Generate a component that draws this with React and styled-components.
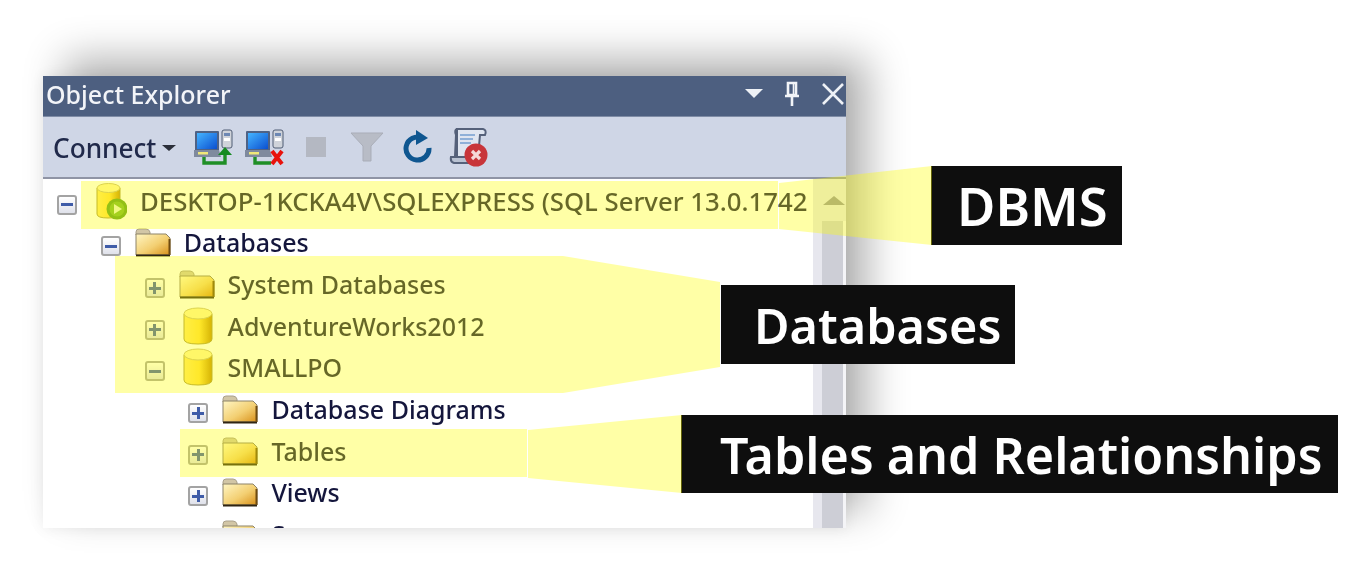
import styled, { createGlobalStyle } from "styled-components";

const GlobalStyle = createGlobalStyle`
  html, body {
    margin: 0;
    padding: 0;
    background: #fff;
    overflow: hidden;
  }
`;

const UI_FONT = `"Noto Sans", "Open Sans", sans-serif`;

const Stage = styled.div`
  position: relative;
  width: 1370px;
  height: 570px;
  box-sizing: border-box;
  padding: 76px 0 0 43px;
  overflow: hidden;
  background: #fff;
  font-family: ${UI_FONT};
`;

const Panel = styled.div`
  width: 803px;
  height: 452px;
  display: flex;
  flex-direction: column;
  overflow: hidden;
  background: #fff;
  box-shadow: 22px -18px 38px rgba(0, 0, 0, 0.3), 0 0 14px rgba(0, 0, 0, 0.07);
`;

const TitleBar = styled.div`
  flex: 0 0 41px;
  box-sizing: border-box;
  display: flex;
  align-items: center;
  justify-content: space-between;
  padding: 0 1px 5px 3px;
  background: #4d5f80;
  border-bottom: 1px solid #7f8ca6;
`;

const TitleText = styled.div`
  color: #f2f4f8;
  font-size: 25px;
  font-weight: 500;
  filter: blur(0.6px);
`;

const TitleIcons = styled.div`
  display: flex;
  align-items: center;
  gap: 20px;
  filter: blur(0.5px);
`;

const Toolbar = styled.div`
  flex: 0 0 62px;
  box-sizing: border-box;
  display: flex;
  align-items: center;
  padding-left: 10px;
  background: #cfd6e6;
  border-bottom: 2px solid #8f94a5;
`;

const ConnectButton = styled.div`
  display: flex;
  align-items: center;
  gap: 6px;
  width: 135px;
  padding-top: 2px;
  color: #20294a;
  font-size: 26.2px;
  font-weight: 500;
  filter: blur(0.6px);
`;

const Caret = styled.span`
  width: 0;
  height: 0;
  border-left: 7px solid transparent;
  border-right: 7px solid transparent;
  border-top: 6px solid #2b2f3a;
`;

const ToolButton = styled.div`
  width: 51px;
  height: 40px;
  display: flex;
  align-items: center;
  justify-content: center;
  filter: blur(0.7px);
`;

const TreeArea = styled.div`
  flex: 1;
  display: flex;
  min-height: 0;
`;

const Tree = styled.div`
  flex: 1;
  padding-top: 1px;
  overflow: hidden;
`;

const Row = styled.div`
  height: 41.67px;
  display: flex;
  align-items: center;
  padding-left: ${(p) => 14 + p.$level * 43.8}px;
  filter: blur(0.6px);
`;

const Expander = styled.div`
  flex: 0 0 20px;
  height: 20px;
  box-sizing: border-box;
  margin: 8px 14px 0 0;
  display: flex;
  align-items: center;
  justify-content: center;
  position: relative;
  border: 2px solid #a3a3a3;
  border-radius: 3px;
  background: linear-gradient(#ffffff, #dfe1ea);

  &::before {
    content: "";
    width: 12px;
    height: 3px;
    background: #3f5ca8;
  }
  &::after {
    content: "";
    display: ${(p) => (p.$open ? "none" : "block")};
    position: absolute;
    width: 3px;
    height: 12px;
    background: #3f5ca8;
  }
`;

const IconCell = styled.div`
  flex: 0 0 36px;
  margin-right: 13px;
  display: flex;
  align-items: center;
`;

const Label = styled.div`
  color: #14163c;
  font-size: ${(p) => (p.$wide ? 25.75 : 25)}px;
  font-weight: 500;
  white-space: nowrap;
`;

const ScrollBar = styled.div`
  flex: 0 0 32px;
  display: flex;
  flex-direction: column;
  background: linear-gradient(90deg, #e7e7ee 0 9px, #cdced6 9px 30px, #f4f4f7 30px);
`;

const ScrollUp = styled.div`
  height: 42px;
  display: flex;
  justify-content: center;
  align-items: center;
  padding-right: 1px;
  background: #e7e7ee;

  &::before {
    content: "";
    width: 0;
    height: 0;
    margin-left: 10px;
    border-left: 11px solid transparent;
    border-right: 11px solid transparent;
    border-bottom: 9px solid #95959f;
  }
`;

const Callout = styled.div`
  position: absolute;
  left: ${(p) => p.$left}px;
  top: ${(p) => p.$top}px;
  width: ${(p) => p.$width}px;
  height: ${(p) => p.$height}px;
  box-sizing: border-box;
  padding-left: ${(p) => p.$inset}px;
  display: flex;
  align-items: center;
  background: #0e0e0e;
  color: #fff;
  font-size: ${(p) => p.$size}px;
  font-weight: 600;
  white-space: nowrap;
`;

const Highlights = styled.svg`
  position: absolute;
  left: 0;
  top: 0;
  pointer-events: none;
`;

const HiddenDefs = styled.svg`
  position: absolute;
  width: 0;
  height: 0;
`;

const Defs = () => (
  <HiddenDefs>
    <defs>
      <linearGradient id="folderFill" x1="0" y1="0" x2="1" y2="1">
        <stop offset="0" stopColor="#fff6c4" />
        <stop offset="0.55" stopColor="#f3cf72" />
        <stop offset="1" stopColor="#d88f18" />
      </linearGradient>
      <linearGradient id="cylFill" x1="0" y1="0" x2="1" y2="0">
        <stop offset="0" stopColor="#ffe66a" />
        <stop offset="0.55" stopColor="#ffdc40" />
        <stop offset="1" stopColor="#c08c08" />
      </linearGradient>
      <linearGradient id="screenFill" x1="0" y1="0" x2="1" y2="1">
        <stop offset="0" stopColor="#45b4ff" />
        <stop offset="1" stopColor="#0b4fd0" />
      </linearGradient>
    </defs>
  </HiddenDefs>
);

const FolderIcon = () => (
  <svg width="36" height="30" viewBox="0 0 36 30">
    <path d="M1 5 Q1 2 4 2 H11 Q14 2 15 5 V8 H1Z" fill="#d2c6a6" stroke="#a9a08a" />
    <path d="M1 7 H31 L35 11 V28 H1Z" fill="url(#folderFill)" stroke="#8d8368" />
    <path d="M1 28.5 H35" stroke="#2f2513" strokeWidth="2" />
    <path d="M34.5 12 V28" stroke="#6e4a10" strokeWidth="2" />
  </svg>
);

const DatabaseIcon = () => (
  <svg width="30" height="38" viewBox="0 0 30 38" style={{ marginLeft: 4 }}>
    <path d="M1 7 V32 Q1 37 15 37 Q29 37 29 32 V7Z" fill="url(#cylFill)" stroke="#a8963e" />
    <ellipse cx="15" cy="6.5" rx="14" ry="5.5" fill="#fff3a0" stroke="#c9bb78" />
  </svg>
);

const ServerIcon = () => (
  <svg width="36" height="38" viewBox="0 0 36 38">
    <path d="M6 6 V32 Q6 36 17 36 Q29 36 29 32 V6Z" fill="url(#cylFill)" stroke="#a8963e" />
    <ellipse cx="17.5" cy="6" rx="11.5" ry="4.5" fill="#fff3a0" stroke="#c9bb78" />
    <circle cx="26" cy="27" r="10.5" fill="#5a9e22" />
    <circle cx="26" cy="27" r="7.5" fill="#76b82e" />
    <path d="M23 22 L31 27 L23 32Z" fill="#e8f4c8" />
  </svg>
);

const ConnectIcon = ({ children }) => (
  <svg width="40" height="38" viewBox="0 0 40 38">
    <rect x="28" y="2" width="10" height="18" rx="2" fill="#cfd3da" stroke="#4f5c74" />
    <rect x="30" y="5" width="6" height="3" fill="#6d88b4" />
    <rect x="30" y="10" width="6" height="3" fill="#fff" />
    <rect x="1" y="3" width="24" height="20" rx="1" fill="#4f6285" />
    <rect x="3" y="5" width="20" height="16" fill="url(#screenFill)" />
    <path d="M0 22 H25 L27 29 H0Z" fill="#7f8a9e" />
    <rect x="4" y="24" width="10" height="2.5" fill="#f0e878" />
    {children}
  </svg>
);

const PinIcon = () => (
  <svg width="18" height="26" viewBox="0 0 18 26" fill="none" stroke="#f2f4f8" strokeWidth="2.6">
    <path d="M5 2 H13 V14 H5Z M2 15 H16 M9 15 V25" />
    <path d="M10.5 3 V13" strokeWidth="1.6" />
  </svg>
);

const rows = [
  { level: 0, open: true, wide: true, icon: <ServerIcon />, label: "DESKTOP-1KCKA4V\\SQLEXPRESS (SQL Server 13.0.1742" },
  { level: 1, open: true, icon: <FolderIcon />, label: "Databases" },
  { level: 2, icon: <FolderIcon />, label: "System Databases" },
  { level: 2, icon: <DatabaseIcon />, label: "AdventureWorks2012" },
  { level: 2, open: true, icon: <DatabaseIcon />, label: "SMALLPO" },
  { level: 3, icon: <FolderIcon />, label: "Database Diagrams" },
  { level: 3, icon: <FolderIcon />, label: "Tables" },
  { level: 3, icon: <FolderIcon />, label: "Views" },
  { level: 3, icon: <FolderIcon />, label: "S" },
];

const App = () => {
  return (
    <Stage>
      <GlobalStyle />
      <Defs />
      <Panel>
        <TitleBar>
          <TitleText>Object Explorer</TitleText>
          <TitleIcons>
            <svg width="18" height="9" viewBox="0 0 18 9">
              <path d="M0 0 H18 L9 9Z" fill="#eef1f6" />
            </svg>
            <PinIcon />
            <svg width="24" height="22" viewBox="0 0 24 22">
              <path d="M2 1 L22 21 M22 1 L2 21" stroke="#eef1f6" strokeWidth="2.6" />
            </svg>
          </TitleIcons>
        </TitleBar>
        <Toolbar>
          <ConnectButton>
            Connect
            <Caret />
          </ConnectButton>
          <ToolButton>
            <ConnectIcon>
              <path d="M10 29 V35 H31 V26" fill="none" stroke="#1f8f26" strokeWidth="3.4" />
              <path d="M24 27 L31 19 L38 27Z" fill="#148a20" />
            </ConnectIcon>
          </ToolButton>
          <ToolButton>
            <ConnectIcon>
              <path d="M10 29 V35 H26" fill="none" stroke="#1f8f26" strokeWidth="3.4" />
              <path d="M27 23 L37 36 M37 23 L27 36" stroke="#e8120c" strokeWidth="4" />
            </ConnectIcon>
          </ToolButton>
          <ToolButton>
            <svg width="20" height="20" viewBox="0 0 20 20">
              <rect width="20" height="20" fill="#b4b8c2" />
            </svg>
          </ToolButton>
          <ToolButton>
            <svg width="34" height="30" viewBox="0 0 34 30">
              <path d="M1 1 H33 L21 14 V29 H13 V14Z" fill="#b8bcc6" stroke="#a9adb8" />
            </svg>
          </ToolButton>
          <ToolButton>
            <svg width="30" height="34" viewBox="0 0 30 34" fill="none">
              <path d="M19 8 A11.5 11.5 0 1 0 26 18" stroke="#0f5690" strokeWidth="5" />
              <path d="M13 0 L25 8 L13 15Z" fill="#0f5690" />
            </svg>
          </ToolButton>
          <ToolButton>
            <svg width="40" height="40" viewBox="0 0 40 40">
              <path d="M8 2 H34 Q38 3 36 8 H31 L29 30 H8Z" fill="#dfe5f0" stroke="#55617a" strokeWidth="2" />
              <path d="M8 2 Q5 3 7 8 L6 29" fill="none" stroke="#55617a" strokeWidth="2" />
              <path d="M2 30 H26 V36 H5 Q1 35 2 30Z" fill="#b9c2d2" stroke="#55617a" strokeWidth="2" />
              <path d="M11 8 H26 M11 12 H24 M11 16 H22" stroke="#8fb0d8" strokeWidth="2" />
              <circle cx="27" cy="28" r="11.5" fill="#c8353a" />
              <path d="M23 24 L31 32 M31 24 L23 32" stroke="#f5d8d8" strokeWidth="3.2" />
            </svg>
          </ToolButton>
        </Toolbar>
        <TreeArea>
          <Tree>
            {rows.map((r) => (
              <Row key={r.label} $level={r.level}>
                <Expander $open={r.open} />
                <IconCell>{r.icon}</IconCell>
                <Label $wide={r.wide}>{r.label}</Label>
              </Row>
            ))}
          </Tree>
          <ScrollBar>
            <ScrollUp />
          </ScrollBar>
        </TreeArea>
      </Panel>

      <Callout $left={931} $top={166} $width={191} $height={79} $inset={26} $size={52.5}>DBMS</Callout>
      <Callout $left={721} $top={285} $width={294} $height={79} $inset={33} $size={48.6}>Databases</Callout>
      <Callout $left={681} $top={415} $width={657} $height={78} $inset={39} $size={50.2}>Tables and Relationships</Callout>

      <Highlights width="1370" height="570" viewBox="0 0 1370 570">
        <g fill="#ffff00" fillOpacity="0.35">
          <path d="M81 181 H778 V229 H81Z" />
          <path d="M779 183 L932 166 V245 L779 229Z" />
          <path d="M115 256 H563 L720 282 V367 L563 393 H115Z" />
          <path d="M180 429 H527 V477 H180Z" />
          <path d="M528 430 L682 415 V493 L528 478Z" />
        </g>
      </Highlights>
    </Stage>
  );
};

export default App;
